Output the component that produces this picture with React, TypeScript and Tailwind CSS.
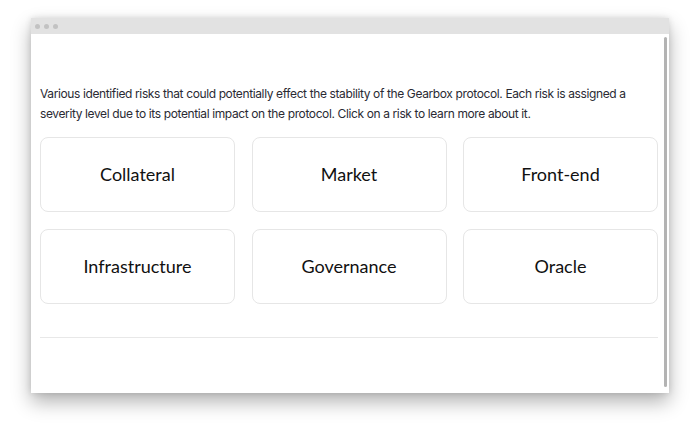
import React from "react";

const risks = ["Collateral", "Market", "Front-end", "Infrastructure", "Governance", "Oracle"];

export default function App() {
  return (
    <div className="w-[700px] h-[438px] bg-white pt-[18px] pl-[31px]">
      <div className="w-[638px] h-[375px] flex flex-col bg-white shadow-[0_9px_18px_rgba(0,0,0,0.3),0_0_6px_rgba(0,0,0,0.12)]">
        <div className="h-[16px] bg-[#e2e2e2] flex items-center gap-[4px] pl-[4px]">
          <span className="w-[5px] h-[5px] rounded-full bg-[#c2c2c2]" />
          <span className="w-[5px] h-[5px] rounded-full bg-[#c2c2c2]" />
          <span className="w-[5px] h-[5px] rounded-full bg-[#c2c2c2]" />
        </div>
        <div className="flex-1 flex">
          <div className="flex-1 pl-[9px] pr-[4px] pt-[50px]">
            <p className="text-[12px] leading-[20px] tracking-[-0.38px] text-[#2a2a33] font-['Inter',sans-serif]">
              Various identified risks that could potentially effect the stability of the Gearbox protocol. Each risk is assigned a severity level due to its potential impact on the protocol. Click on a risk to learn more about it.
            </p>
            <div className="mt-[13px] grid grid-cols-3 gap-x-[16.5px] gap-y-[17px]">
              {risks.map((r) => (
                <div
                  key={r}
                  className="h-[75px] rounded-[8px] border border-[#e6e6e6] flex items-center justify-center text-[18px] text-[#111] font-['Lato',sans-serif]"
                >
                  {r}
                </div>
              ))}
            </div>
            <div className="mt-[33px] border-t border-[#e8e8e8]" />
          </div>
          <div className="w-[7px] flex justify-center pt-[3px] pb-[6px]">
            <div className="w-[3px] h-full bg-[#b3b3b3] rounded-full" />
          </div>
        </div>
      </div>
    </div>
  );
}
